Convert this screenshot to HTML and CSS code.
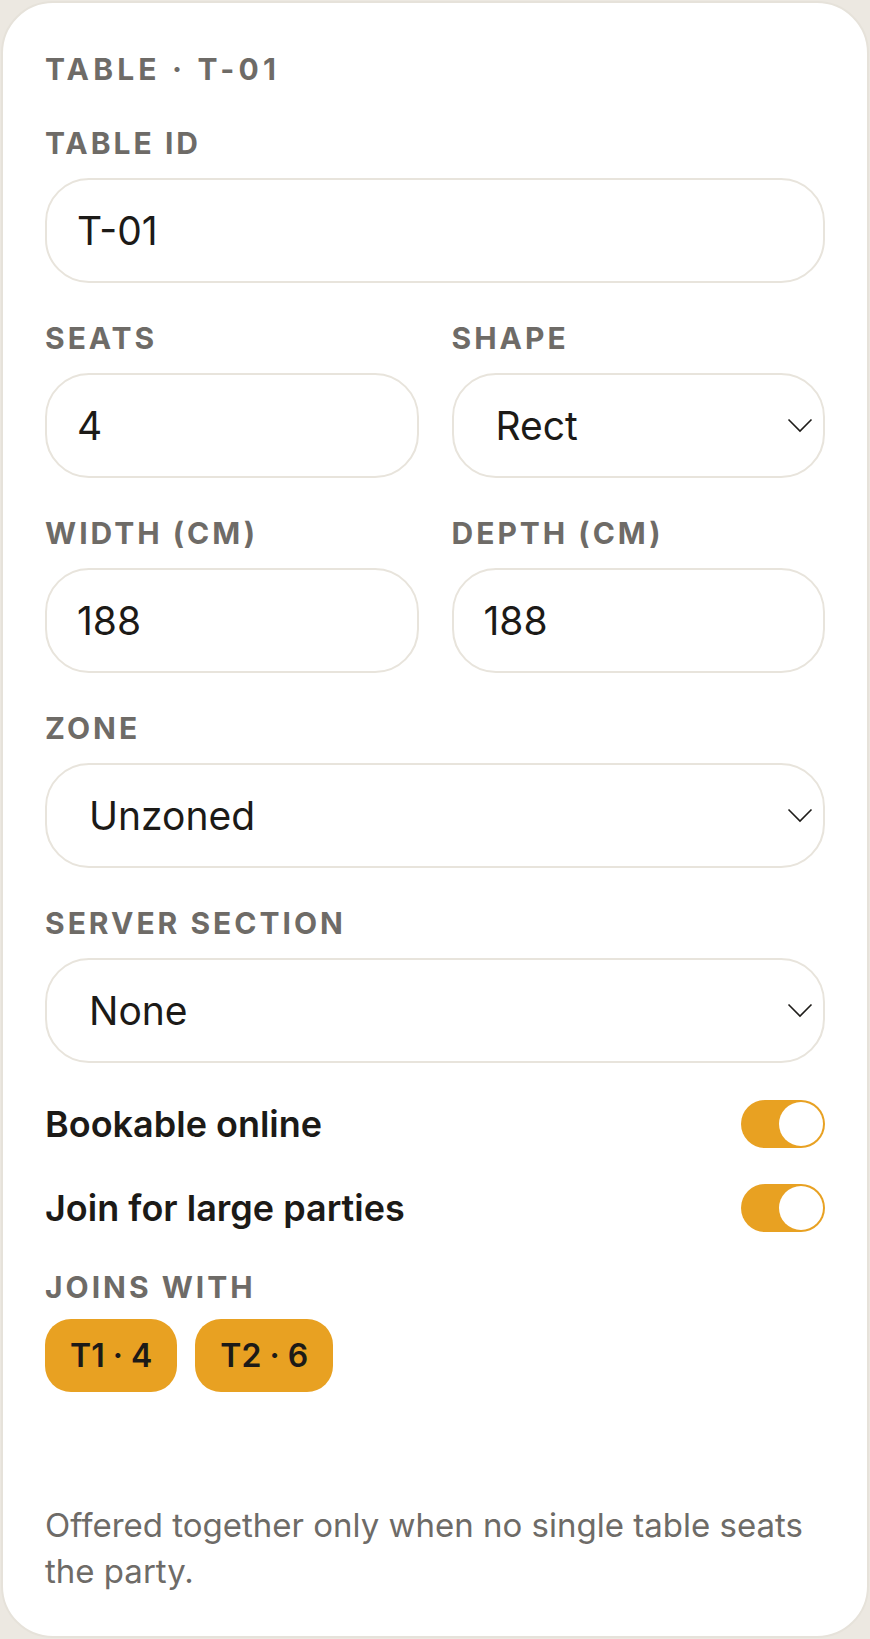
FILE: index.html
```html
<!DOCTYPE html>
<html lang="en">
<head>
<meta charset="utf-8">
<title>Table T-01</title>
<link rel="stylesheet" href="styles.css">
</head>
<body>
<div class="card">
  <div class="label title">Table · T-01</div>

  <div class="field">
    <label class="label" for="tid">Table ID</label>
    <input class="control" id="tid" type="text" value="T-01">
  </div>

  <div class="pair">
    <div class="field">
      <label class="label" for="seats">Seats</label>
      <input class="control" id="seats" type="text" value="4">
    </div>
    <div class="field">
      <label class="label" for="shape">Shape</label>
      <div class="select-wrap">
        <select class="control select" id="shape"><option>Rect</option><option>Round</option></select>
        <svg class="chev" width="26" height="15" viewBox="0 0 26 15"><polyline points="1.5,1.5 13,13 24.5,1.5" fill="none" stroke="#1f1d1a" stroke-width="1.6"/></svg>
      </div>
    </div>
  </div>

  <div class="pair">
    <div class="field">
      <label class="label" for="w">Width (cm)</label>
      <input class="control" id="w" type="text" value="188">
    </div>
    <div class="field">
      <label class="label" for="d">Depth (cm)</label>
      <input class="control" id="d" type="text" value="188">
    </div>
  </div>

  <div class="field">
    <label class="label" for="zone">Zone</label>
    <div class="select-wrap">
      <select class="control select" id="zone"><option>Unzoned</option></select>
      <svg class="chev" width="26" height="15" viewBox="0 0 26 15"><polyline points="1.5,1.5 13,13 24.5,1.5" fill="none" stroke="#1f1d1a" stroke-width="1.6"/></svg>
    </div>
  </div>

  <div class="field">
    <label class="label" for="sec">Server section</label>
    <div class="select-wrap">
      <select class="control select" id="sec"><option>None</option></select>
      <svg class="chev" width="26" height="15" viewBox="0 0 26 15"><polyline points="1.5,1.5 13,13 24.5,1.5" fill="none" stroke="#1f1d1a" stroke-width="1.6"/></svg>
    </div>
  </div>

  <div class="toggle-row">
    <span class="toggle-text">Bookable online</span>
    <span class="toggle on"><span class="knob"></span></span>
  </div>
  <div class="toggle-row last">
    <span class="toggle-text">Join for large parties</span>
    <span class="toggle on"><span class="knob"></span></span>
  </div>

  <div class="label joins">Joins with</div>
  <div class="chips">
    <span class="chip">T1 · 4</span>
    <span class="chip">T2 · 6</span>
  </div>

  <p class="note">Offered together only when no single table seats the party.</p>
</div>
</body>
</html>
```
FILE: styles.css
```css
html, body {
  margin: 0;
}
body {
  padding: 1px;
  background: #ece8e1;
  font-family: Inter, "Noto Sans", sans-serif;
  color: #1c1a17;
}
.card {
  background: #ffffff;
  border: 2px solid #e6e2da;
  border-radius: 52px;
  padding: 48px 42px 42px;
}
.label {
  display: block;
  font-weight: 700;
  font-size: 30px;
  line-height: 36px;
  letter-spacing: 0.1em;
  color: #6e6b67;
  text-transform: uppercase;
  margin: 0 0 17px;
}
.title {
  margin-bottom: 38px;
  letter-spacing: 0.14em;
}
.field {
  margin-bottom: 37px;
}
.pair {
  display: grid;
  grid-template-columns: 1fr 1fr;
  column-gap: 33px;
}
.control {
  box-sizing: border-box;
  display: block;
  width: 100%;
  height: 105px;
  margin: 0;
  border: 2px solid #e8e4dc;
  border-radius: 44px;
  background: #ffffff;
  padding: 0 30px;
  font-family: Inter, "Noto Sans", sans-serif;
  font-size: 39px;
  font-weight: 400;
  color: #1c1a17;
  outline: none;
}
.select {
  appearance: none;
  -webkit-appearance: none;
  padding-left: 42px;
}
.select-wrap {
  position: relative;
}
.chev {
  position: absolute;
  right: 12px;
  top: calc(50% - 8px);
  pointer-events: none;
}
.toggle-row {
  display: flex;
  justify-content: space-between;
  align-items: center;
  height: 48px;
  margin-bottom: 36px;
}
.toggle-row.last {
  margin-bottom: 37px;
}
.toggle-text {
  font-size: 36px;
  font-weight: 600;
  color: #1c1a17;
}
.toggle {
  box-sizing: border-box;
  width: 84px;
  height: 48px;
  border-radius: 24px;
  background: #e8a122;
  padding: 2px;
  display: flex;
  justify-content: flex-end;
}
.knob {
  width: 44px;
  height: 44px;
  border-radius: 50%;
  background: #ffffff;
}
.joins {
  margin-bottom: 14px;
}
.chips {
  display: flex;
  gap: 18px;
}
.chip {
  height: 73px;
  line-height: 73px;
  padding: 0 25px;
  border-radius: 26px;
  background: #e8a122;
  font-size: 32px;
  font-weight: 600;
  color: #1c1a17;
}
.note {
  margin: 110px 0 0;
  font-size: 33px;
  line-height: 46px;
  color: #6e6b67;
}
```
